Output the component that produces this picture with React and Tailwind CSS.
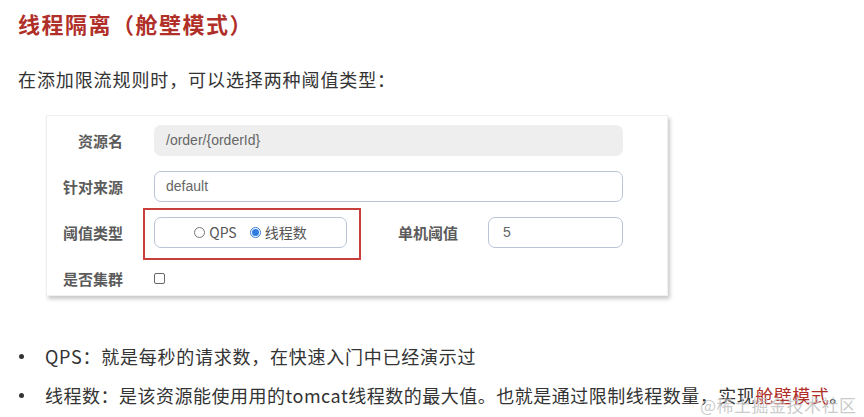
const CJK = { fontFamily: '"Noto Sans CJK SC", "Noto Sans", sans-serif' }

function Label({ children }) {
  return (
    <div className="w-[76px] shrink-0 text-right text-[15px] font-bold text-[#5b5b5b] leading-none">
      {children}
    </div>
  )
}

function Radio({ checked, label }) {
  return (
    <label className="flex items-center gap-[4px]">
      {checked ? (
        <span className="w-[11px] h-[11px] rounded-full border border-[#2f7de1] flex items-center justify-center">
          <span className="w-[7px] h-[7px] rounded-full bg-[#2f7de1]" />
        </span>
      ) : (
        <span className="w-[11px] h-[11px] rounded-full border border-[#777] bg-white" />
      )}
      <span className="text-[14px] text-[#555] leading-none">{label}</span>
    </label>
  )
}

export default function App() {
  return (
    <div className="w-[864px] h-[417px] bg-white relative overflow-hidden pl-[18px]" style={CJK}>
      {/* 标题 */}
      <h2 className="pt-[8px] text-[22px] leading-[30px] font-bold text-[#b03029] tracking-[1.5px]">
        线程隔离（舱壁模式）
      </h2>

      <p className="mt-[29px] text-[18px] leading-[24px] text-[#333] tracking-[0.9px]">
        在添加限流规则时，可以选择两种阈值类型：
      </p>

      {/* 表单截图 */}
      <div className="ml-[28px] mt-[24px] w-[622px] h-[181px] bg-white border border-[#f0f0f0] shadow-[2px_3px_4px_rgba(0,0,0,0.22)] pt-[1px] pr-[44px]">
        <div className="flex items-center h-[46px]">
          <Label>资源名</Label>
          <div className="ml-[31px] flex-1 h-[31px] rounded-[7px] bg-[#eeeeee] flex items-center pl-[12px] text-[14px] text-[#666]" style={{ fontFamily: '"Liberation Sans", sans-serif' }}>
            /order/{'{'}orderId{'}'}
          </div>
        </div>
        <div className="flex items-center h-[46px]">
          <Label>针对来源</Label>
          <div className="ml-[31px] flex-1 h-[31px] rounded-[7px] border border-[#b9c5d6] flex items-center pl-[11px] text-[14px] text-[#666]" style={{ fontFamily: '"Liberation Sans", sans-serif' }}>
            default
          </div>
        </div>
        <div className="flex items-center h-[46px]">
          <Label>阈值类型</Label>
          <div className="ml-[31px] relative">
            <div className="absolute left-[-11px] top-[-9px] w-[218px] h-[52px] border-2 border-[#c8403a]" />
            <div className="w-[193px] h-[31px] rounded-[7px] border border-[#b9c5d6] flex items-center justify-center gap-[13px]">
              <Radio label="QPS" />
              <Radio checked label="线程数" />
            </div>
          </div>
          <div className="ml-[51px] w-[61px] text-[15px] font-bold text-[#5b5b5b] leading-none">单机阈值</div>
          <div className="ml-[29px] flex-1 h-[31px] rounded-[7px] border border-[#b9c5d6] flex items-center pl-[14px] text-[14px] text-[#666]" style={{ fontFamily: '"Liberation Sans", sans-serif' }}>
            5
          </div>
        </div>
        <div className="flex items-center h-[46px]">
          <Label>是否集群</Label>
          <span className="ml-[31px] w-[11px] h-[11px] rounded-[2px] border border-[#666] bg-white" />
        </div>
      </div>

      {/* 说明 */}
      <ul className="mt-[48px] text-[18px] text-[#333] leading-[24px] tracking-[0.75px]">
        <li className="flex items-center">
          <span className="w-[27px] flex pl-[1px]">
            <span className="w-[5px] h-[5px] rounded-full bg-[#333]" />
          </span>
          <span>QPS：就是每秒的请求数，在快速入门中已经演示过</span>
        </li>
        <li className="flex items-center mt-[15px] whitespace-nowrap tracking-[0.5px]">
          <span className="w-[27px] flex pl-[1px]">
            <span className="w-[5px] h-[5px] rounded-full bg-[#333]" />
          </span>
          <span>
            线程数：是该资源能使用用的tomcat线程数的最大值。也就是通过限制线程数量，实现
            <span className="text-[#b03029]">舱壁模式</span>。
          </span>
        </li>
      </ul>

      {/* 水印 */}
      <div className="absolute left-[700px] top-[394px] text-[17px] leading-[22px] text-[#bdbdbd]/80 tracking-[0.5px]">
        @稀土掘金技术社区
      </div>
    </div>
  )
}
